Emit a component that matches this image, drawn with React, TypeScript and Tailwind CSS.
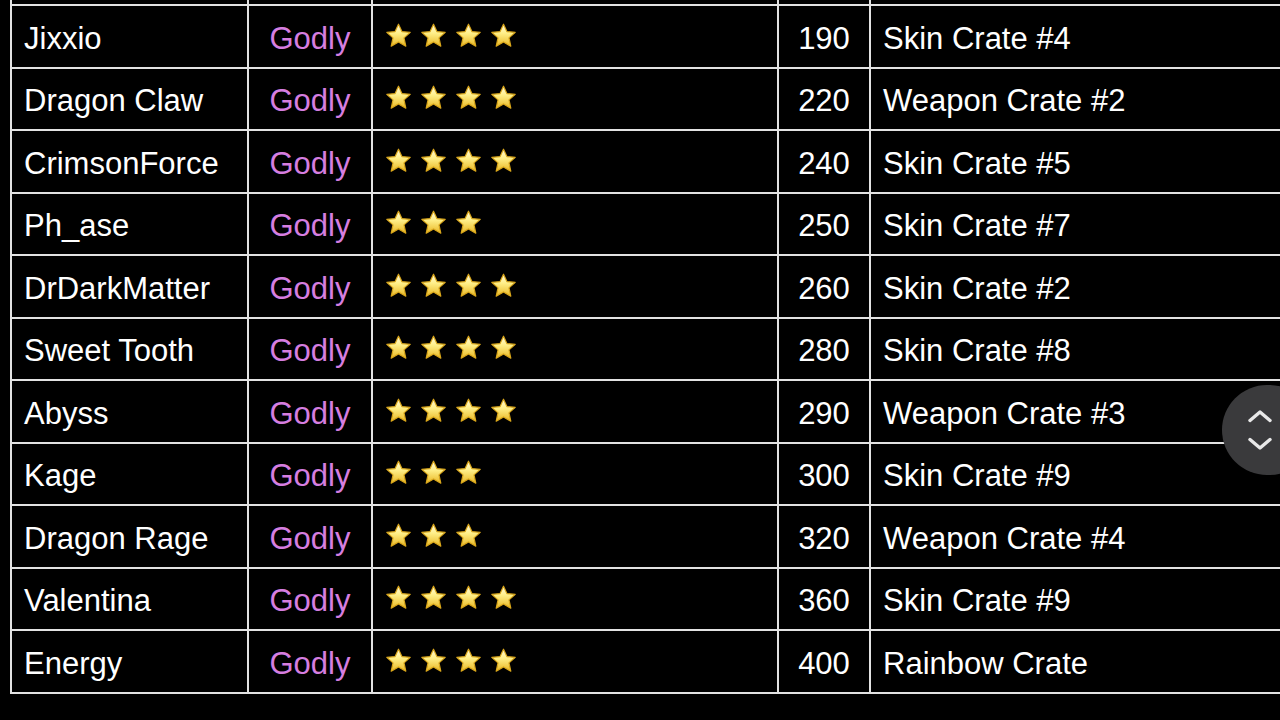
const rows = [
  { name: "Jixxio", stars: 4, price: 190, crate: "Skin Crate #4" },
  { name: "Dragon Claw", stars: 4, price: 220, crate: "Weapon Crate #2" },
  { name: "CrimsonForce", stars: 4, price: 240, crate: "Skin Crate #5" },
  { name: "Ph_ase", stars: 3, price: 250, crate: "Skin Crate #7" },
  { name: "DrDarkMatter", stars: 4, price: 260, crate: "Skin Crate #2" },
  { name: "Sweet Tooth", stars: 4, price: 280, crate: "Skin Crate #8" },
  { name: "Abyss", stars: 4, price: 290, crate: "Weapon Crate #3" },
  { name: "Kage", stars: 3, price: 300, crate: "Skin Crate #9" },
  { name: "Dragon Rage", stars: 3, price: 320, crate: "Weapon Crate #4" },
  { name: "Valentina", stars: 4, price: 360, crate: "Skin Crate #9" },
  { name: "Energy", stars: 4, price: 400, crate: "Rainbow Crate" },
];

const Star = () => (
  <svg width="27" height="26" viewBox="0 0 27 26">
    <defs>
      <linearGradient id="starFill" x1="0" y1="0" x2="0" y2="1">
        <stop offset="0" stopColor="#fffbe6" />
        <stop offset="0.4" stopColor="#fff08a" />
        <stop offset="1" stopColor="#e9b824" />
      </linearGradient>
    </defs>
    <path
      d="M13.5 1.2 L16.9 8.6 L25.2 9.4 L19 14.9 L20.8 23.2 L13.5 18.9 L6.2 23.2 L8 14.9 L1.8 9.4 L10.1 8.6 Z"
      fill="url(#starFill)"
      stroke="#d9a61a"
      strokeWidth="1.2"
      strokeLinejoin="round"
    />
  </svg>
);

const cell = "border-r-2 border-[#e2e2e2] flex items-center";

const Row = ({ r }: { r: (typeof rows)[number] }) => (
  <div className="flex h-[62.5px] border-b-2 border-[#e2e2e2]">
    <div className={`${cell} w-[237px] pl-3 pt-[5px]`}>{r.name}</div>
    <div className={`${cell} w-[124px] justify-center pt-[5px] text-[#d67ee0]`}>Godly</div>
    <div className={`${cell} w-[406px] pl-3 pb-[1px] gap-2`}>
      {Array.from({ length: r.stars }).map((_, i) => (
        <Star key={i} />
      ))}
    </div>
    <div className={`${cell} w-[92px] justify-center pt-[5px]`}>{r.price}</div>
    <div className={`${cell} w-[460px] pl-3 pt-[5px]`}>{r.crate}</div>
  </div>
);

export default function App() {
  return (
    <div
      className="relative w-[1280px] h-[720px] overflow-hidden bg-black text-white text-[31px]"
      style={{ fontFamily: '"Liberation Sans", Arial, sans-serif' }}
    >
      <div className="ml-[10px] border-l-2 border-[#e2e2e2] w-[1321px]">
        <div className="flex h-[6px] border-b-2 border-[#e2e2e2]">
          <div className="border-r-2 border-[#e2e2e2] w-[237px]" />
          <div className="border-r-2 border-[#e2e2e2] w-[124px]" />
          <div className="border-r-2 border-[#e2e2e2] w-[406px]" />
          <div className="border-r-2 border-[#e2e2e2] w-[92px]" />
          <div className="w-[460px]" />
        </div>
        {rows.map((r) => (
          <Row key={r.name} r={r} />
        ))}
      </div>

      <div className="absolute left-[1222px] top-[385px] w-[92px] h-[90px] rounded-full bg-[#3a3a3c] flex flex-col items-start justify-center pl-[25px] gap-[14px]">
        <svg width="26" height="14" viewBox="0 0 26 14" fill="none">
          <path d="M3 11.5 L13 3 L23 11.5" stroke="#e8e8e8" strokeWidth="3.4" strokeLinecap="round" strokeLinejoin="round" />
        </svg>
        <svg width="26" height="14" viewBox="0 0 26 14" fill="none">
          <path d="M3 2.5 L13 11 L23 2.5" stroke="#e8e8e8" strokeWidth="3.4" strokeLinecap="round" strokeLinejoin="round" />
        </svg>
      </div>
    </div>
  );
}
